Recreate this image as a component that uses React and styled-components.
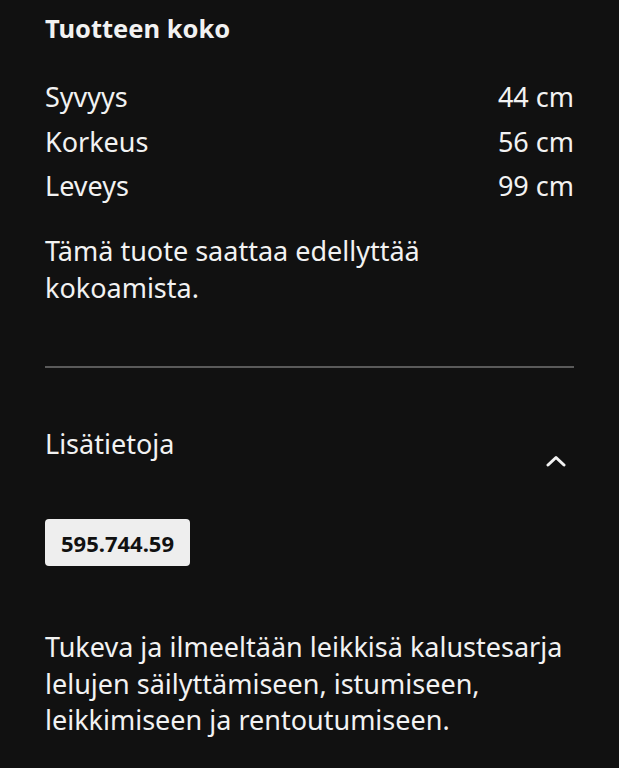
import React from "react";
import styled, { createGlobalStyle } from "styled-components";

const Global = createGlobalStyle`
  html, body { margin: 0; padding: 0; background: #111111; }
  body { font-family: "Noto Sans", "Open Sans", sans-serif; color: #f2f2f2; }
`;

const Page = styled.div`
  width: 619px;
  height: 768px;
  box-sizing: border-box;
  padding: 10px 45px 0 45px;
  background: #111111;
  overflow: hidden;
`;

const Title = styled.h2`
  margin: 0;
  font-size: 25.5px;
  font-weight: 700;
  line-height: 36px;
`;

const DimList = styled.dl`
  margin: 29px 0 0 0;
  display: flex;
  flex-direction: column;
`;

const DimRow = styled.div`
  display: flex;
  justify-content: space-between;
  font-size: 27px;
  line-height: 44.7px;
`;

const DimLabel = styled.dt`
  margin: 0;
`;

const DimValue = styled.dd`
  margin: 0;
`;

const Paragraph = styled.p`
  margin: ${(p) => p.$mt || 0}px 0 0 0;
  font-size: 27px;
  line-height: 36.5px;
`;

const Divider = styled.hr`
  margin: 60px 0 0 0;
  border: none;
  height: 2px;
  background: #5a5a5a;
`;

const AccordionHeader = styled.div`
  display: flex;
  justify-content: space-between;
  align-items: flex-start;
  margin-top: 58px;
`;

const AccordionTitle = styled.span`
  font-size: 27px;
  line-height: 36px;
`;

const Chevron = styled.svg`
  width: 20px;
  height: 12px;
  margin-top: 29px;
  margin-right: 8px;
`;

const ArticleNumber = styled.div`
  display: inline-flex;
  align-items: center;
  margin-top: 52px;
  height: 47px;
  padding: 0 16px;
  box-sizing: border-box;
  background: #eeeeee;
  color: #111111;
  border-radius: 4px;
  font-size: 22px;
  font-weight: 700;
`;

export default function App() {
  return (
    <>
      <Global />
      <Page>
        <Title>Tuotteen koko</Title>
        <DimList>
          <DimRow>
            <DimLabel>Syvyys</DimLabel>
            <DimValue>44 cm</DimValue>
          </DimRow>
          <DimRow>
            <DimLabel>Korkeus</DimLabel>
            <DimValue>56 cm</DimValue>
          </DimRow>
          <DimRow>
            <DimLabel>Leveys</DimLabel>
            <DimValue>99 cm</DimValue>
          </DimRow>
        </DimList>
        <Paragraph $mt={24}>Tämä tuote saattaa edellyttää kokoamista.</Paragraph>
        <Divider />
        <AccordionHeader>
          <AccordionTitle>Lisätietoja</AccordionTitle>
          <Chevron viewBox="0 0 20 12" fill="none">
            <polyline points="2,10 10,2.5 18,10" stroke="#f2f2f2" strokeWidth="3" strokeLinecap="round" strokeLinejoin="round" />
          </Chevron>
        </AccordionHeader>
        <ArticleNumber>595.744.59</ArticleNumber>
        <Paragraph $mt={63}>
          Tukeva ja ilmeeltään leikkisä kalustesarja lelujen säilyttämiseen, istumiseen, leikkimiseen ja rentoutumiseen.
        </Paragraph>
      </Page>
    </>
  );
}
